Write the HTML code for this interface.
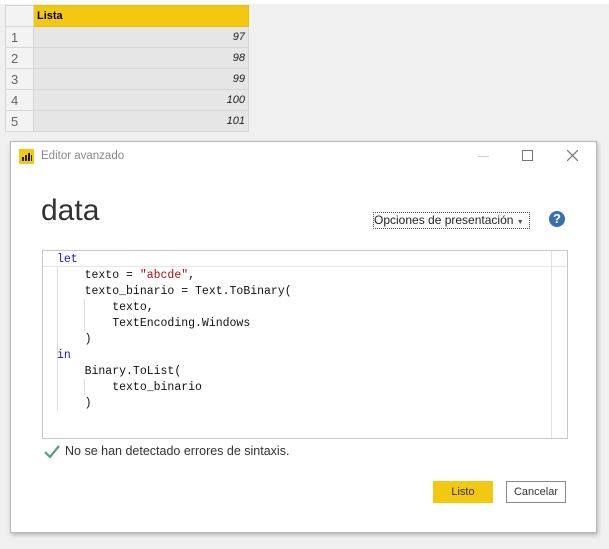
<!DOCTYPE html>
<html><head><style>
body{margin:0;width:609px;height:549px;background:#f0f0f0;position:relative;overflow:hidden;font-family:"Liberation Sans",sans-serif}
.top{position:absolute;left:0;top:0;width:609px;height:4px;background:#fff}
table{position:absolute;left:5px;top:5px;border-collapse:collapse;font-size:11px}
td{border:1px solid #d6d6d6;height:20px;padding:0}
td.i{background:#f3f3f3;color:#666;font-size:13px;text-align:left;padding-left:5px;width:22px}
td.v{width:211px;background:#e6e6e6;text-align:right;font-style:italic;padding-right:3px;color:#222}
.hdr td{background:#f2c811;border-color:#e8c000;font-weight:bold;height:20px}
.dlg{position:absolute;left:10px;top:141px;width:585px;height:390px;background:#fff;border:1px solid #b8b8b8;box-shadow:1px 2px 4px rgba(0,0,0,.25)}
.code{position:absolute;left:31px;top:108px;width:524px;height:187px;border:1px solid #c8c8c8;font-family:"Liberation Mono",monospace;font-size:11.5px}
.ln{position:absolute;left:14px;height:16px;line-height:16px;white-space:pre;color:#111}
.k{color:#1a1aa6}.s{color:#a31515}
.g{position:absolute;width:1px;background:#ddd}
</style></head><body>
<div class="top"></div>
<table>
<tr class="hdr"><td style="background:#f3f3f3;border-color:#d6d6d6;width:27px"></td><td style="width:209px;padding-left:3px">Lista</td></tr>
<tr><td class="i">1</td><td class="v">97</td></tr>
<tr><td class="i">2</td><td class="v">98</td></tr>
<tr><td class="i">3</td><td class="v">99</td></tr>
<tr><td class="i">4</td><td class="v">100</td></tr>
<tr><td class="i">5</td><td class="v">101</td></tr>
</table>
<div class="dlg">
 <svg style="position:absolute;left:8px;top:7px" width="15" height="15"><rect width="15" height="15" fill="#f2c811"/><rect x="3" y="8" width="2" height="4" fill="#222"/><rect x="6" y="6" width="2" height="6" fill="#222"/><rect x="9" y="4" width="2" height="8" fill="#222"/><rect x="12" y="6" width="1" height="6" fill="#222"/></svg>
 <div style="position:absolute;left:30px;top:8px;font-size:11.5px;color:#888">Editor avanzado</div>
 <div style="position:absolute;left:467px;top:14px;width:11px;height:1px;background:#ccc"></div>
 <div style="position:absolute;left:511px;top:8px;width:9px;height:9px;border:1px solid #777"></div>
 <svg style="position:absolute;left:556px;top:8px" width="11" height="11"><path d="M0 0L11 11M11 0L0 11" stroke="#777" stroke-width="1.2"/></svg>
 <div style="position:absolute;left:30px;top:52px;font-size:30px;color:#333">data</div>
 <div style="position:absolute;left:362px;top:70px;width:155px;height:15px;border:1px dotted #555;font-size:12px;color:#222;line-height:15px;white-space:nowrap">Opciones de presentación <span style="font-size:7px;color:#555">▼</span></div>
 <div style="position:absolute;left:538px;top:69px;width:16px;height:16px;border-radius:50%;background:#3a6fb0;color:#fff;font-weight:bold;font-size:13px;text-align:center;line-height:16px">?</div>
 <div class="code">
  <div style="position:absolute;left:0;top:0;width:508px;height:15px;border-bottom:1px solid #e6e6e6"></div>
  <div style="position:absolute;left:508px;top:0;width:15px;height:187px;border-left:1px solid #e0e0e0"></div>
  <div style="position:absolute;left:508px;top:0;width:15px;height:15px;border-bottom:1px solid #e0e0e0"></div>
  <div class="g" style="left:14px;top:16px;height:144px"></div>
  <div class="g" style="left:41px;top:48px;height:32px"></div>
  <div class="g" style="left:41px;top:128px;height:16px"></div>
  <div class="ln k" style="top:1px">let</div>
  <div class="ln" style="top:17px">    texto = <span class="s">"abcde"</span>,</div>
  <div class="ln" style="top:33px">    texto_binario = Text.ToBinary(</div>
  <div class="ln" style="top:49px">        texto,</div>
  <div class="ln" style="top:65px">        TextEncoding.Windows</div>
  <div class="ln" style="top:81px">    )</div>
  <div class="ln k" style="top:97px">in</div>
  <div class="ln" style="top:113px">    Binary.ToList(</div>
  <div class="ln" style="top:129px">        texto_binario</div>
  <div class="ln" style="top:145px">    )</div>
 </div>
 <svg style="position:absolute;left:33px;top:303px" width="16" height="14"><path d="M1 7L6 12L15 1" stroke="#5a9a86" stroke-width="2.2" fill="none"/></svg>
 <div style="position:absolute;left:54px;top:302px;font-size:12.5px;color:#333">No se han detectado errores de sintaxis.</div>
 <div style="position:absolute;left:422px;top:339px;width:60px;height:22px;background:#f2c811;font-size:11px;text-align:center;line-height:22px;color:#333">Listo</div>
 <div style="position:absolute;left:495px;top:339px;width:58px;height:20px;border:1px solid #888;font-size:11px;text-align:center;line-height:20px;color:#333">Cancelar</div>
</div>
</body></html>
